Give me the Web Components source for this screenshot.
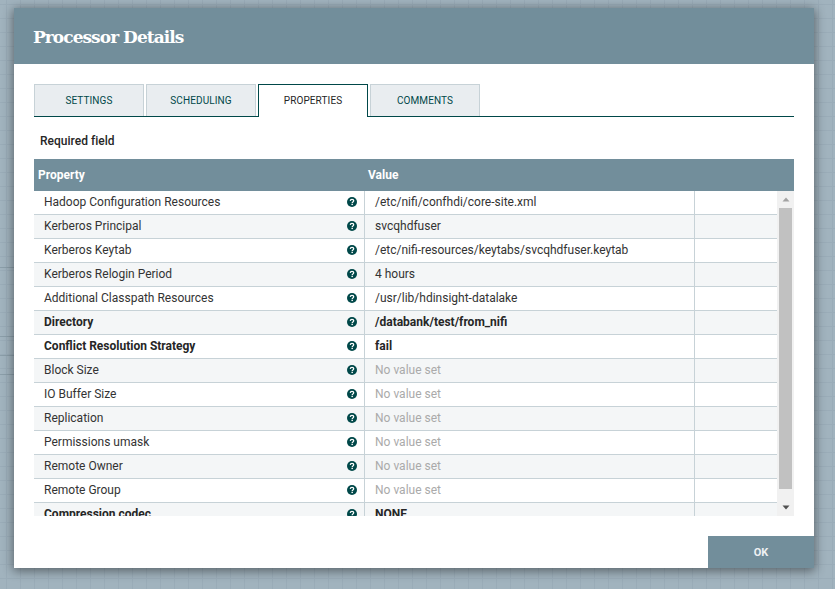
<!DOCTYPE html>
<html>
<head>
<meta charset="utf-8">
<title>Processor Details</title>
<style>
  html, body {
    margin: 0;
    height: 100%;
    overflow: hidden;
  }
  body {
    font-family: Roboto, sans-serif;
    background-color: #a1b3be;
    background-image:
      /* edges of the canvas nodes that peek out left of the dialog */
      linear-gradient(#8b9ea9, #8b9ea9),
      linear-gradient(#8b9ea9, #8b9ea9),
      linear-gradient(#8b9ea9, #8b9ea9),
      linear-gradient(#8b9ea9, #8b9ea9),
      linear-gradient(to right, #9aacb8 1px, transparent 1px),
      linear-gradient(to bottom, #9aacb8 1px, transparent 1px);
    background-size: 14px 1px, 14px 1px, 14px 1px, 14px 1px, 14px 14px, 14px 14px;
    background-position: 0 267px, 0 336px, 0 355px, 0 374px, 6px 0, 0 4px;
    background-repeat: no-repeat, no-repeat, no-repeat, no-repeat, repeat, repeat;
  }
</style>
</head>
<body>
<processor-dialog heading="Processor Details">
  <dialog-tab slot="tabs">SETTINGS</dialog-tab>
  <dialog-tab slot="tabs">SCHEDULING</dialog-tab>
  <dialog-tab slot="tabs" active>PROPERTIES</dialog-tab>
  <dialog-tab slot="tabs">COMMENTS</dialog-tab>
  <property-table>
    <property-row name="Hadoop Configuration Resources" value="/etc/nifi/confhdi/core-site.xml"></property-row>
    <property-row name="Kerberos Principal" value="svcqhdfuser"></property-row>
    <property-row name="Kerberos Keytab" value="/etc/nifi-resources/keytabs/svcqhdfuser.keytab"></property-row>
    <property-row name="Kerberos Relogin Period" value="4 hours"></property-row>
    <property-row name="Additional Classpath Resources" value="/usr/lib/hdinsight-datalake"></property-row>
    <property-row name="Directory" value="/databank/test/from_nifi" required></property-row>
    <property-row name="Conflict Resolution Strategy" value="fail" required></property-row>
    <property-row name="Block Size"></property-row>
    <property-row name="IO Buffer Size"></property-row>
    <property-row name="Replication"></property-row>
    <property-row name="Permissions umask"></property-row>
    <property-row name="Remote Owner"></property-row>
    <property-row name="Remote Group"></property-row>
    <property-row name="Compression codec" value="NONE" required></property-row>
  </property-table>
</processor-dialog>

<script>
// Modal shell: title bar, tab strip, body, OK button
class ProcessorDialog extends HTMLElement {
  constructor() {
    super();
    this.attachShadow({ mode: "open" });
    this.shadowRoot.innerHTML = `
      <style>
        :host {
          display: flex;
          flex-direction: column;
          box-sizing: border-box;
          width: 800px;
          height: 560px;
          margin: 8px 0 0 14px;
          background: #fff;
          box-shadow: 0 2px 10px 1px rgba(0, 0, 0, 0.45);
        }
        header {
          flex: none;
          box-sizing: border-box;
          height: 56px;
          display: flex;
          align-items: center;
          padding: 2px 0 0 19px;
          background: #728e9b;
          color: #fff;
          font: bold 17px/1 "Roboto Slab", "DejaVu Serif", serif;
          letter-spacing: -0.95px;
        }
        .tabs {
          flex: none;
          display: flex;
          gap: 2px;
          height: 32px;
          margin: 20px 20px 0;
          border-bottom: 1px solid #004849;
        }
        .required {
          flex: none;
          margin: 17px 20px 0 26px;
          height: 15px;
          font: 500 12px/15px Roboto, sans-serif;
          letter-spacing: 0.02px;
          color: #262626;
        }
        .body {
          flex: none;
          margin: 10px 20px 0;
        }
        footer {
          flex: 1;
          display: flex;
          justify-content: flex-end;
          align-items: flex-end;
        }
        button {
          width: 106px;
          height: 32px;
          border: 0;
          padding: 0;
          background: #728e9b;
          color: #eef1f3;
          font: bold 11px Roboto, sans-serif;
        }
      </style>
      <header></header>
      <div class="tabs"><slot name="tabs"></slot></div>
      <div class="required">Required field</div>
      <div class="body"><slot></slot></div>
      <footer><button>OK</button></footer>
    `;
  }

  connectedCallback() {
    this.shadowRoot.querySelector("header").textContent = this.getAttribute("heading");
  }
}

class DialogTab extends HTMLElement {
  constructor() {
    super();
    this.attachShadow({ mode: "open" });
    this.shadowRoot.innerHTML = `
      <style>
        :host {
          display: flex;
          align-items: center;
          justify-content: center;
          box-sizing: border-box;
          width: 110px;
          height: 32px;
          background: #e9edf0;
          border: 1px solid #c7d2d7;
          border-bottom: 0;
          color: #004849;
          font: 400 10px Roboto, sans-serif;
          letter-spacing: 0.1px;
        }
        :host([active]) {
          height: 33px;
          padding-bottom: 1px;
          background: #fff;
          border-color: #004849;
          color: #262626;
        }
      </style>
      <slot></slot>
    `;
  }
}

class PropertyTable extends HTMLElement {
  constructor() {
    super();
    this.attachShadow({ mode: "open" });
    this.shadowRoot.innerHTML = `
      <style>
        :host {
          display: block;
          width: 760px;
        }
        .head {
          display: grid;
          grid-template-columns: 330px 1fr;
          height: 32px;
          align-items: center;
          background: #728e9b;
          color: #fff;
          font: bold 12px Roboto, sans-serif;
        }
        .head span {
          padding-left: 4px;
        }
        .view {
          display: flex;
          height: 325px;
          overflow: hidden;
        }
        .rows {
          flex: 1;
          min-width: 0;
        }
        ::slotted(property-row:nth-child(even)) {
          background: #f4f6f7;
        }
        .bar {
          flex: none;
          width: 17px;
          display: flex;
          flex-direction: column;
          align-items: center;
          background: #f1f1f1;
        }
        .arrow {
          flex: none;
          height: 17px;
          display: flex;
          align-items: center;
          justify-content: center;
        }
        .thumb {
          width: 13px;
          height: 281px;
          background: #c1c1c1;
        }
        .gap { flex: 1; }
      </style>
      <div class="head"><span>Property</span><span>Value</span></div>
      <div class="view">
        <div class="rows"><slot></slot></div>
        <div class="bar">
          <div class="arrow"><svg width="8" height="5" viewBox="0 0 8 5"><path d="M4 0.5 7.5 4.5H0.5Z" fill="#a3a3a3"/></svg></div>
          <div class="thumb"></div>
          <div class="gap"></div>
          <div class="arrow"><svg width="8" height="5" viewBox="0 0 8 5"><path d="M0.5 0.5H7.5L4 4.5Z" fill="#505050"/></svg></div>
        </div>
      </div>
    `;
  }
}

class PropertyRow extends HTMLElement {
  constructor() {
    super();
    this.attachShadow({ mode: "open" });
    this.shadowRoot.innerHTML = `
      <style>
        :host {
          display: grid;
          grid-template-columns: 331px 330px 1fr;
          box-sizing: border-box;
          height: 24px;
          border-bottom: 1px solid #c7d2d7;
          color: #333;
          font: 400 12px/23px Roboto, sans-serif;
        }
        :host([required]) {
          font-weight: 700;
          color: #262626;
        }
        .name {
          display: flex;
          justify-content: space-between;
          align-items: center;
          padding: 0 7px 0 10px;
          border-right: 1px solid #c7d2d7;
        }
        .value {
          padding-left: 10px;
          border-right: 1px solid #c7d2d7;
          white-space: nowrap;
        }
        .unset {
          color: #aaa;
          font-weight: 400;
        }
        svg {
          flex: none;
          display: block;
          margin-bottom: 1px;
        }
      </style>
      <div class="name">
        <span id="name"></span>
        <!-- question-circle -->
        <svg width="10" height="10" viewBox="0 0 11 11">
          <circle cx="5.5" cy="5.5" r="5.5" fill="#004849"/>
          <path d="M3.6 4.2C3.7 3.2 4.5 2.7 5.5 2.7C6.6 2.7 7.4 3.3 7.4 4.2C7.4 5.4 5.7 5.4 5.7 6.5" fill="none" stroke="#fff" stroke-width="1.4"/>
          <rect x="4.9" y="7.4" width="1.6" height="1.5" fill="#fff"/>
        </svg>
      </div>
      <div class="value" id="value"></div>
      <div></div>
    `;
  }

  connectedCallback() {
    this.shadowRoot.getElementById("name").textContent = this.getAttribute("name");
    const cell = this.shadowRoot.getElementById("value");
    if (this.hasAttribute("value")) {
      cell.textContent = this.getAttribute("value");
    } else {
      cell.textContent = "No value set";
      cell.classList.add("unset");
    }
  }
}

customElements.define("processor-dialog", ProcessorDialog);
customElements.define("dialog-tab", DialogTab);
customElements.define("property-table", PropertyTable);
customElements.define("property-row", PropertyRow);
</script>
</body>
</html>
